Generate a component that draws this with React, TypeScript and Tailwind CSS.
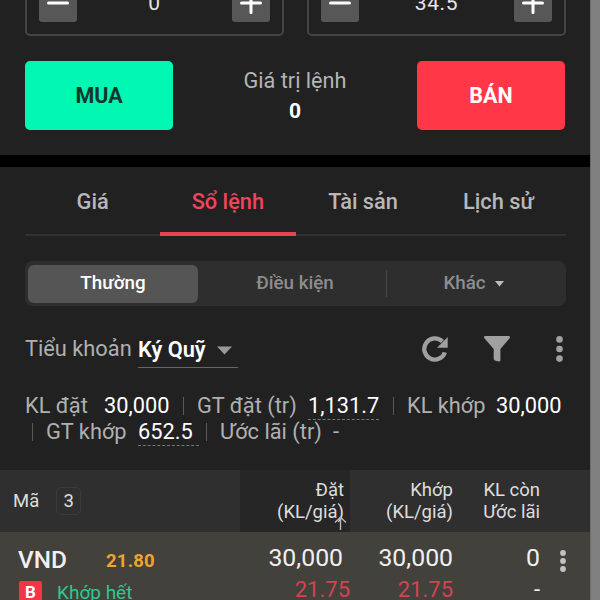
import clsx from "clsx";
import type { ReactNode } from "react";

const tabs = ["Giá", "Sổ lệnh", "Tài sản", "Lịch sử"];

function Stepper({ value, className }: { value: string; className?: string }) {
  return (
    <div
      className={clsx(
        "flex h-9 w-[259px] items-end justify-between overflow-hidden rounded-b-[5px] border-2 border-t-0 border-[#444] px-3 pb-3",
        className
      )}
    >
      <div className="flex h-[38px] w-[38px] shrink-0 items-center justify-center rounded-[3px] bg-[#575757]">
        <svg width="22" height="22" viewBox="0 0 22 22" stroke="#fff" strokeWidth="3" strokeLinecap="round">
          <path d="M1.5 11h19" />
        </svg>
      </div>
      <span className="pb-[7px] text-[21px] leading-6 tracking-[0.6px] text-[#e6e6e6]">{value}</span>
      <div className="flex h-[38px] w-[38px] shrink-0 items-center justify-center rounded-[3px] bg-[#575757]">
        <svg width="22" height="22" viewBox="0 0 22 22" stroke="#fff" strokeWidth="3" strokeLinecap="round">
          <path d="M1.5 11h19M11 1.5v19" />
        </svg>
      </div>
    </div>
  );
}

function Bar() {
  return <span className="h-[18px] w-px shrink-0 bg-[#595959]" />;
}

function Label({ children, className }: { children: ReactNode; className?: string }) {
  return <span className={clsx("text-[#b0b0b0]", className)}>{children}</span>;
}

export default function App() {
  return (
    <div className="flex h-[600px] w-[600px] overflow-hidden bg-[#212121] font-[Roboto,sans-serif] whitespace-nowrap">
      <div className="flex w-[590px] shrink-0 flex-col">
        {/* Quantity and price */}
        <div className="flex shrink-0 justify-between pr-6 pl-[25px]">
          <Stepper value="0" />
          <Stepper value="34.5" />
        </div>

        {/* Buy / sell */}
        <div className="mt-[25px] flex h-[69px] shrink-0 items-center justify-between pr-[25px] pl-[25px]">
          <button className="h-[69px] w-[148px] rounded-[5px] bg-[#00f8b3] pt-[2px] text-[21.5px] font-bold text-[#15352d]">
            MUA
          </button>
          <div className="flex flex-col items-center pt-px">
            <span className="text-[21.7px] leading-[30px] text-[#b5b5b5]">Giá trị lệnh</span>
            <span className="text-[21px] leading-[30px] font-bold text-white">0</span>
          </div>
          <button className="h-[69px] w-[148px] rounded-[5px] bg-[#ff3747] pt-[2px] text-[21.5px] font-bold text-white">
            BÁN
          </button>
        </div>

        <div className="mt-[25px] h-3 shrink-0 bg-black" />

        {/* Tabs */}
        <div className="mr-6 ml-[25px] flex h-[69px] shrink-0 border-b-2 border-[#303232]">
          {tabs.map((tab) => (
            <div
              key={tab}
              className={clsx(
                "relative flex-1 pt-5 text-center text-[21.8px] leading-[30px] font-medium",
                tab === "Sổ lệnh" ? "text-[#f0455a]" : "text-[#b8b8b8]"
              )}
            >
              {tab}
              {tab === "Sổ lệnh" && <span className="absolute inset-x-0 -bottom-[2px] h-1 bg-[#e84355]" />}
            </div>
          ))}
        </div>

        {/* Order type */}
        <div className="mt-[25px] mr-6 ml-[25px] flex h-[45px] shrink-0 items-center rounded-[7px] bg-[#2e2e2e] px-[3px] text-[18.8px] font-medium text-[#8d8d8d]">
          <div className="flex h-[38px] w-[170px] items-center justify-center rounded-[6px] bg-[#555] text-white">
            Thường
          </div>
          <div className="flex w-[188px] items-center justify-center pl-[6px]">Điều kiện</div>
          <span className="h-[27px] w-px bg-[#474747]" />
          <div className="flex flex-1 items-center justify-center gap-[9px] pr-[3px]">
            Khác
            <svg width="9" height="6" viewBox="0 0 9 6" fill="#bdbdbd">
              <path d="M0 0h9L4.5 5.5z" />
            </svg>
          </div>
        </div>

        {/* Sub account */}
        <div className="mt-[26px] mr-6 ml-[25px] flex h-9 shrink-0 items-start text-[21.8px] leading-[34px]">
          <Label className="w-[106px]">Tiểu khoản</Label>
          <div className="ml-[7px] flex h-9 w-[100px] items-center border-b border-[#666] pt-px">
            <span className="font-semibold text-white">Ký Quỹ</span>
            <svg className="ml-[11px]" width="15" height="9" viewBox="0 0 15 9" fill="#999">
              <path d="M0 .5h15L7.5 8.5z" />
            </svg>
          </div>
          <div className="mr-[3px] ml-auto flex h-[34px] items-center text-[#a0a0a0]">
            <svg width="26" height="26" viewBox="0 0 26 26" fill="none">
              <path d="M22.9 16.4A10.6 10.6 0 1 1 20.4 5.5" stroke="currentColor" strokeWidth="4.3" />
              <path d="M25.7 1v10.8H15z" fill="currentColor" />
            </svg>
            <svg className="ml-[36px]" width="26" height="26" viewBox="0 0 26 26" fill="currentColor">
              <path d="M1.3 0h23.4c1.2 0 1.6 1.2.9 2.2L16.4 13v11c0 1.2-.8 1.6-1.8 1.4l-3.7-1c-.8-.2-1.2-.8-1.2-1.6V13L.4 2.2C-.3 1.2.1 0 1.3 0z" />
            </svg>
            <svg className="ml-[46px]" width="7" height="26" viewBox="0 0 7 26" fill="currentColor">
              <circle cx="3.5" cy="3.4" r="3.3" />
              <circle cx="3.5" cy="13" r="3.3" />
              <circle cx="3.5" cy="22.6" r="3.3" />
            </svg>
          </div>
        </div>

        {/* Totals */}
        <div className="mt-6 ml-[25px] flex h-[27px] shrink-0 items-center text-[21.8px] leading-[27px] text-white">
          <Label className="w-[79px]">KL đặt</Label>
          <span className="w-[79px]">30,000</span>
          <Bar />
          <Label className="ml-[13px] w-[111px]">GT đặt (tr)</Label>
          <span className="w-[71px] border-b border-dashed border-[#777]">1,131.7</span>
          <span className="w-[14px]" />
          <Bar />
          <Label className="ml-[13px] w-[89px]">KL khớp</Label>
          <span>30,000</span>
        </div>
        <div className="ml-8 flex h-[26px] shrink-0 items-center text-[21.8px] leading-[26px] text-white">
          <Bar />
          <Label className="ml-[13px] w-[92px]">GT khớp</Label>
          <span className="w-[61px] border-b border-dashed border-[#777]">652.5</span>
          <span className="w-[7px]" />
          <Bar />
          <Label className="ml-[13px] w-[113px]">Ước lãi (tr)</Label>
          <Label>-</Label>
        </div>

        {/* Table header */}
        <div className="mt-[25px] flex h-[62px] shrink-0 bg-[#2f2f2f] text-[18.5px] leading-[22px] text-[#dedede]">
          <div className="flex w-60 items-center pl-[13px]">
            Mã
            <span className="ml-[17px] flex h-7 w-[25px] items-center justify-center rounded-[5px] border border-[#3b3b3b]">3</span>
          </div>
          <div className="relative w-[110px] bg-[#262626] pt-[9px] pr-[6px] text-right">
            Đặt
            <br />
            (KL/giá)
            <svg
              className="absolute right-[3px] bottom-[2px]"
              width="13"
              height="14"
              viewBox="0 0 13 14"
              fill="none"
              stroke="#bbb"
              strokeWidth="1.4"
            >
              <path d="M6.5 14V1.5M1 6.5l5.5-5.3L12 6.5" />
            </svg>
          </div>
          <div className="w-[103px] pt-[9px] text-right">
            Khớp
            <br />
            (KL/giá)
          </div>
          <div className="w-[87px] pt-[9px] text-right">
            KL còn
            <br />
            Ước lãi
          </div>
        </div>

        {/* Order row */}
        <div className="flex h-[68px] shrink-0 overflow-hidden bg-[#42413b] text-[#f0f0f0]">
          <div className="w-60 pl-[18px]">
            <div className="flex h-[45px] items-center pt-3">
              <span className="w-[88px] text-[24.4px] font-medium">VND</span>
              <span className="pt-[2px] text-[18.5px] font-bold tracking-[0.2px] text-[#eda52f]">21.80</span>
            </div>
            <div className="mt-1 ml-px flex h-6 items-center">
              <span className="flex h-6 w-[23px] items-center justify-center rounded-[2px] bg-[#f63448] text-[17px] font-bold text-white">
                B
              </span>
              <span className="ml-[15px] text-[19px] text-[#2dc98f]">Khớp hết</span>
            </div>
          </div>
          <div className="flex w-[110px] flex-col items-end pt-[11px] text-[24.8px] leading-[30px]">
            <span className="pr-[7px]">30,000</span>
            <span className="mt-[2px] text-[22px] text-[#d64252]">21.75</span>
          </div>
          <div className="flex w-[103px] flex-col items-end pt-[11px] text-[24.8px] leading-[30px]">
            <span>30,000</span>
            <span className="mt-[2px] text-[22px] text-[#d64252]">21.75</span>
          </div>
          <div className="flex w-[87px] flex-col items-end pt-[11px] text-[24.8px] leading-[30px]">
            <span>0</span>
            <span className="mt-[2px] text-[22px]">-</span>
          </div>
          <svg className="mt-[18px] ml-[20px]" width="6" height="22" viewBox="0 0 6 22" fill="#c2c2c2">
            <circle cx="3" cy="3" r="2.9" />
            <circle cx="3" cy="11" r="2.9" />
            <circle cx="3" cy="19" r="2.9" />
          </svg>
        </div>
      </div>

      {/* Scrollbar */}
      <div className="w-[10px] shrink-0 border-l border-[#6c6c6c] bg-[#808080]" />
    </div>
  );
}
